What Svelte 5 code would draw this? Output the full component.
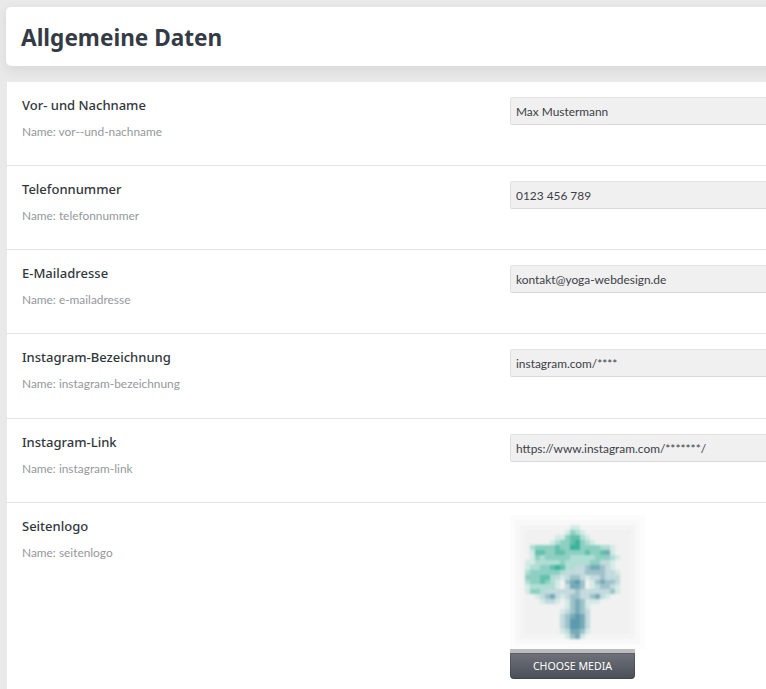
<script>
  const fields = [
    { label: 'Vor- und Nachname', name: 'vor--und-nachname', value: 'Max Mustermann' },
    { label: 'Telefonnummer', name: 'telefonnummer', value: '0123 456 789' },
    { label: 'E-Mailadresse', name: 'e-mailadresse', value: 'kontakt@yoga-webdesign.de' },
    { label: 'Instagram-Bezeichnung', name: 'instagram-bezeichnung', value: 'instagram.com/****' },
    { label: 'Instagram-Link', name: 'instagram-link', value: 'https://www.instagram.com/*******/' }
  ];
  const palette = {
    w: '#fcfcfc', v: '#f8f8f8', u: '#f4f4f4', '.': '#f1f1f1', a: '#d3eae5', b: '#b0ddd4', c: '#8dd0c2',
    d: '#62c0ad', e: '#3cb29b', f: '#c3dade', g: '#9fc2ca', h: '#77aab7', i: '#5c9aad'
  };
  const SIZE = 27;
  const spans = {
    2: [12, 'aa'],
    3: [11, 'acba'],
    4: [9, 'aacddba'],
    5: [8, 'abccdecba'],
    6: [4, 'bcccc' + 'dccee' + 'ccccbba'],
    7: [4, 'addccddcccc' + 'dccdha'],
    8: [4, 'acbcccc' + 'cbbbbbcccba'],
    9: [3, 'aabbbbbcbbbbbccffa'],
    10: [3, 'abbccdedbbffghhgfa'],
    11: [3, 'bccccccbffffggggffa'],
    12: [3, 'cccddbfafggfaffgfff'],
    13: [3, 'bccdcba.ghig.aghggf'],
    14: [3, 'abbbbba.fhhg.afggfa'],
    15: [3, 'accbffffffgffffffga'],
    16: [5, 'afghfafggffghfa'],
    17: [6, 'affa.aghgaaa'],
    18: [11, 'aghga'],
    19: [10, 'afghgf'],
    20: [10, 'fghihf'],
    21: [10, 'fgiihf'],
    22: [10, 'fgiihf'],
    23: [10, 'afhhga'],
    24: [11, 'agha'],
    25: [12, 'aaa']
  };
  const rows = Array.from({ length: SIZE }, (_, y) => {
    return Array.from({ length: SIZE }, (_, x) => {
      const edge = Math.min(x, y, SIZE - 1 - x, SIZE - 1 - y);
      if (edge === 0) return 'w';
      if (edge === 1) return 'v';
      const s = spans[y];
      if (s && x >= s[0] && x < s[0] + s[1].length) return s[1][x - s[0]];
      if (edge === 2) return 'u';
      return '.';
    });
  });
</script>

<div class="page">
  <header class="head">
    <h1>Allgemeine Daten</h1>
  </header>
  <section class="card">
    {#each fields as f}
      <div class="row">
        <div class="info">
          <div class="label">{f.label}</div>
          <div class="name">Name: {f.name}</div>
        </div>
        <div class="control">
          <input class="field" type="text" value={f.value} />
        </div>
      </div>
    {/each}
    <div class="row last">
      <div class="info">
        <div class="label">Seitenlogo</div>
        <div class="name">Name: seitenlogo</div>
      </div>
      <div class="control media">
        <div class="logo-frame">
          <svg class="logo" width="135" height="134" viewBox="0 0 27 27" shape-rendering="crispEdges" role="img" aria-label="Seitenlogo">
            {#each rows as r, y}
              {#each r as c, x}
                <rect {x} {y} width="1.02" height="1.02" fill={palette[c]} />
              {/each}
            {/each}
          </svg>
        </div>
        <div class="bar"></div>
        <button class="choose" type="button">Choose Media</button>
      </div>
    </div>
  </section>
</div>

<style>
  :global(html), :global(body) {
    margin: 0;
    overflow: hidden;
    background: #e8e8e8;
  }
  .page {
    width: 766px;
    height: 689px;
    overflow: hidden;
    box-sizing: border-box;
    padding: 7px 0 0 6px;
    background: #e9e9e9;
    font-family: "Noto Sans", "Open Sans", sans-serif;
    color: #32373c;
  }
  .head {
    width: 800px;
    height: 59px;
    box-sizing: border-box;
    padding: 2px 0 0 15px;
    display: flex;
    align-items: center;
    background: #fff;
    border-radius: 5px;
    box-shadow: 0 4px 12px rgba(0, 0, 0, 0.08);
  }
  h1 {
    margin: 0;
    font-size: 22.6px;
    font-weight: 700;
    color: #343b45;
  }
  .card {
    width: 800px;
    margin: 15.5px 0 0 1px;
    background: #fff;
  }
  .row {
    display: grid;
    grid-template-columns: 488px 1fr;
    height: 84.3px;
    box-sizing: border-box;
    padding: 15px 0 0 15px;
    border-bottom: 1px solid #e3e3e3;
  }
  .row.last {
    height: 200px;
    border-bottom: 0;
    padding-top: 14px;
  }
  .info {
    margin-top: -1px;
  }
  .last .info {
    margin-top: 0;
  }
  .label {
    font-size: 13px;
    font-weight: 500;
    line-height: 18px;
    color: #32373c;
  }
  .name {
    margin-top: 9px;
    font-family: "Lato", sans-serif;
    font-size: 11.9px;
    line-height: 18px;
    color: #94989d;
  }
  .field {
    display: block;
    width: 100%;
    height: 28px;
    box-sizing: border-box;
    margin: 0;
    padding: 1px 5px 0;
    background: #f0f0f0;
    border: 1px solid #e2e2e2;
    border-bottom-color: #d8d8d8;
    border-radius: 2px;
    font: 11.9px "Lato", sans-serif;
    color: #3c4046;
    outline: none;
  }
  .media {
    display: flex;
    flex-direction: column;
    align-items: flex-start;
  }
  .logo-frame {
    width: 135px;
    height: 134px;
    margin-top: -2px;
    overflow: hidden;
    background: #fbfbfb;
  }
  .logo {
    display: block;
    filter: blur(1px);
  }
  .bar {
    width: 125px;
    height: 4px;
    background: #bdbdbd;
  }
  .choose {
    width: 125px;
    height: 26px;
    padding: 0;
    border: 0;
    border-radius: 0 0 4px 4px;
    background: linear-gradient(#6f727a, #4a4e57);
    box-shadow: inset 0 0 0 1px rgba(0, 0, 0, 0.15);
    color: #fff;
    font: 10.6px "Noto Sans", sans-serif;
    text-transform: uppercase;
  }
</style>
